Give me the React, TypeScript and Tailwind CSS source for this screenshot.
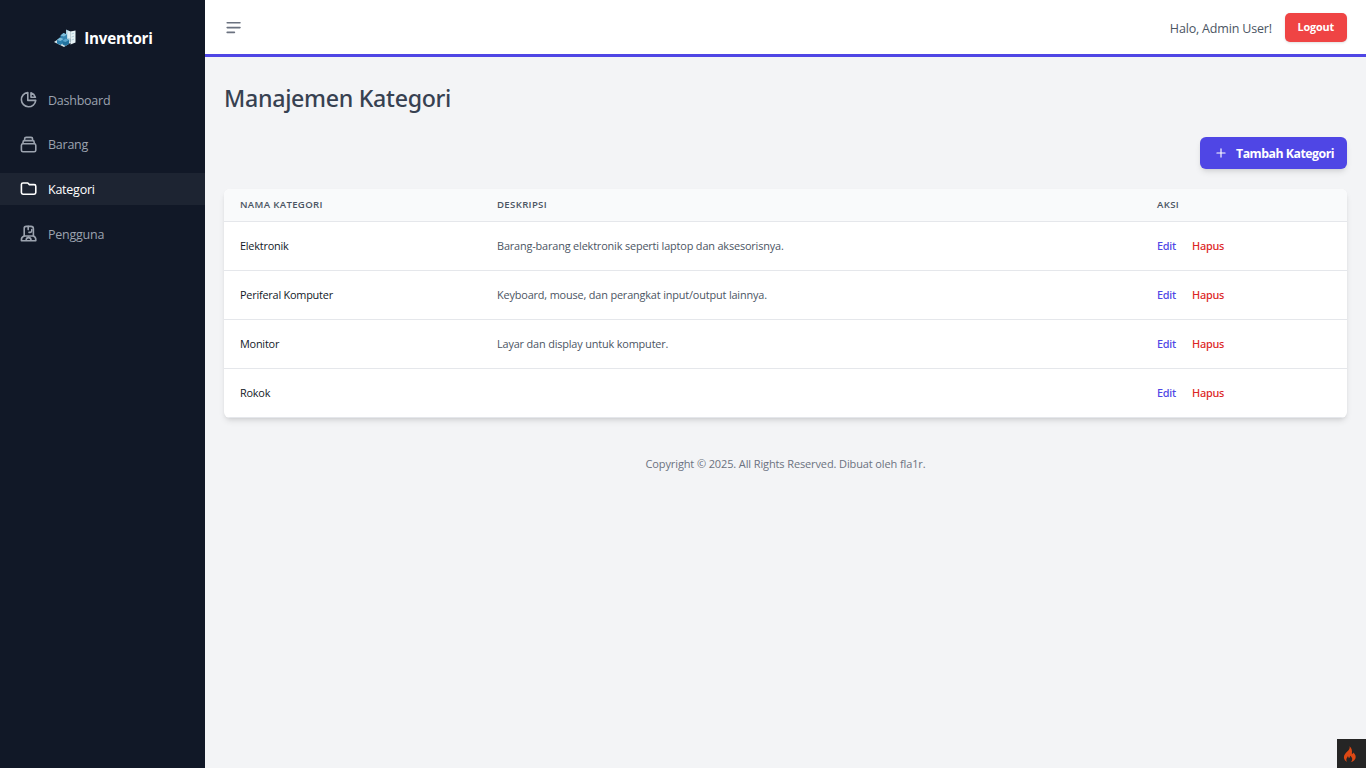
import React from "react";

const navItems = [
  {
    label: "Dashboard",
    active: false,
    paths: [
      "M11 3.055A9.001 9.001 0 1020.945 13H11V3.055z",
      "M20.488 9H15V3.512A9.025 9.025 0 0120.488 9z",
    ],
  },
  {
    label: "Barang",
    active: false,
    paths: [
      "M19 11H5m14 0a2 2 0 012 2v6a2 2 0 01-2 2H5a2 2 0 01-2-2v-6a2 2 0 012-2m14 0V9a2 2 0 00-2-2M5 11V9a2 2 0 012-2m0 0V5a2 2 0 012-2h6a2 2 0 012 2v2M7 7h10",
    ],
  },
  {
    label: "Kategori",
    active: true,
    paths: ["M3 7v10a2 2 0 002 2h14a2 2 0 002-2V9a2 2 0 00-2-2h-6l-2-2H5a2 2 0 00-2 2z"],
  },
  {
    label: "Pengguna",
    active: false,
    paths: [
      "M6.500 15V5.500a2.500 2.500 0 012.500-2.500h6a3 3 0 013 3v9",
      "M11.500 3v4M12.500 10.500h1.500a2 2 0 002-2V7",
      "M6.500 15A5 5 0 003 20v1h18v-1a5 5 0 00-3-5M7 15h11M9 21v-1a3 3 0 016 0v1",
    ],
  },
];

const rows = [
  { name: "Elektronik", description: "Barang-barang elektronik seperti laptop dan aksesorisnya." },
  { name: "Periferal Komputer", description: "Keyboard, mouse, dan perangkat input/output lainnya." },
  { name: "Monitor", description: "Layar dan display untuk komputer." },
  { name: "Rokok", description: "" },
];

function Logo() {
  return (
    <svg viewBox="0 0 24 20" className="mr-px h-5 w-6">
      <path d="M13 1.500l4.500 2v11.500l-4.500-2z" fill="#a9d0e0" />
      <path d="M14.500 2.500l3 1.200v7l-3-1z" fill="#dcecf2" />
      <path d="M17.500 3.500l5-1v12l-5 2z" fill="#e6f2f6" />
      <path d="M18.500 6l2.500-.8M18.500 9l2.500-.8M18.500 12l2.500-.8" stroke="#8fb9c9" strokeWidth=".6" />
      <path d="M1 14l6-4 11 4.500-7 4.500z" fill="#d5e5ea" />
      <path d="M7.500 7.500l3-2.500 3.500 1.500v5l-3 2-3.500-1.500z" fill="#3586b2" />
      <path d="M7.500 7.500l3-2.500 3.500 1.500-3 2z" fill="#7fbedb" />
      <path d="M4 12l3-2.500 3.500 1.500v4l-3 2-3.500-1.500z" fill="#2c7fac" />
      <path d="M4 12l3-2.500 3.500 1.500-3 2z" fill="#7fbedb" />
      <path d="M9.500 13l3-2.500 3.500 1.500v4l-3.500 2-3-1.500z" fill="#23729d" />
      <path d="M9.500 13l3-2.500 3.500 1.500-3.500 2z" fill="#5aa5cc" />
    </svg>
  );
}

function Sidebar() {
  return (
    <aside className="flex w-[205px] shrink-0 flex-col bg-[#111827]">
      <div className="mt-[26px] flex h-6 items-center justify-center gap-[6px] pl-px">
        <Logo />
        <span className="text-[15.2px] font-bold leading-6 tracking-[-0.16px] text-white">Inventori</span>
      </div>
      <nav className="mt-[33.6px] flex flex-col gap-[12.8px]">
        {navItems.map((item) => (
          <a
            key={item.label}
            href="#"
            className={
              item.active
                ? "flex h-8 items-center gap-[9.6px] bg-[#1d2432] px-[19.2px] text-white"
                : "flex h-8 items-center gap-[9.6px] px-[19.2px] text-[#9ca3af]"
            }
          >
            <svg
              viewBox="0 0 24 24"
              className="mb-[0.6px] size-[19.2px] shrink-0"
              fill="none"
              stroke="currentColor"
              strokeWidth="2"
              strokeLinecap="round"
              strokeLinejoin="round"
            >
              {item.paths.map((d) => (
                <path key={d} d={d} />
              ))}
            </svg>
            <span className="pt-[2px] text-[12.5px] leading-5 tracking-[-0.24px]">{item.label}</span>
          </a>
        ))}
      </nav>
    </aside>
  );
}

export default function App() {
  return (
    <div className="flex h-screen overflow-hidden bg-[#f3f4f6] font-['Open_Sans','Noto_Sans',sans-serif]">
      <Sidebar />
      <div className="flex min-w-0 flex-1 flex-col">
        <header className="flex h-[57px] shrink-0 items-center justify-between border-b-[3px] border-[#4f46e5] bg-white px-[19.2px]">
          <button className="pt-[2px] text-[#6b7280]" aria-label="Menu">
            <svg viewBox="0 0 24 24" className="size-[19.2px]" fill="none" stroke="currentColor" strokeWidth="2" strokeLinecap="round">
              <path d="M4 6h16M4 12h16M4 18h9" />
            </svg>
          </button>
          <div className="flex items-center gap-[13px]">
            <span className="pt-1 text-[12.5px] tracking-[-0.18px] text-[#4b5563]">Halo, Admin User!</span>
            <button className="h-[29px] w-[62px] rounded-[5px] bg-[#ef4444] text-[10.8px] font-bold tracking-[-0.1px] text-white shadow-sm">Logout</button>
          </div>
        </header>

        <main className="flex flex-col px-[19px] pt-[25px]">
          <h1 className="font-['Noto_Sans',sans-serif] text-[23.2px] font-medium leading-8 tracking-[-0.3px] text-[#374151]">Manajemen Kategori</h1>
          <div className="mt-[23px] flex justify-end">
            <button className="flex h-8 w-[147px] items-center rounded-[6px] bg-[#4f46e5] pl-[14px] text-white shadow-md">
              <svg viewBox="0 0 24 24" className="size-[14px] shrink-0" fill="none" stroke="currentColor" strokeWidth="2" strokeLinecap="round">
                <path d="M12 5v14M5 12h14" />
              </svg>
              <span className="ml-2 whitespace-nowrap pt-[3px] text-[12.3px] font-bold tracking-[-0.48px]">Tambah Kategori</span>
            </button>
          </div>

          <div className="mt-5 overflow-hidden rounded-[6px] bg-white shadow-md">
            <table className="w-full table-fixed border-separate border-spacing-0 text-left">
              <colgroup>
                <col className="w-[257px]" />
                <col className="w-[660px]" />
                <col />
              </colgroup>
              <thead>
                <tr className="h-[33px] bg-[#f9fafb] text-[9.6px] uppercase tracking-[0.34px] text-[#4b5563] [&>th]:border-b [&>th]:border-[#e5e7eb] [&>th]:px-4 [&>th]:py-0 [&>th]:font-semibold">
                  <th>Nama Kategori</th>
                  <th>Deskripsi</th>
                  <th>Aksi</th>
                </tr>
              </thead>
              <tbody>
                {rows.map((row) => (
                  <tr
                    key={row.name}
                    className="h-[49px] text-[10.9px] tracking-[-0.16px] [&>td]:border-b [&>td]:border-[#e5e7eb] [&>td]:px-4 [&>td]:pb-0 [&>td]:pt-px"
                  >
                    <td className="tracking-[-0.22px] text-[#111827]">{row.name}</td>
                    <td className="text-[#4b5563]">{row.description}</td>
                    <td className="font-['Noto_Sans',sans-serif] font-medium tracking-[-0.24px]">
                      <a href="#" className="text-[#4f46e5]">Edit</a>
                      <a href="#" className="ml-4 text-[#dc2626]">Hapus</a>
                    </td>
                  </tr>
                ))}
              </tbody>
            </table>
          </div>

          <footer className="mt-[38px] text-center text-[11px] leading-4 tracking-[-0.12px] text-[#6b7280]">
            Copyright © 2025. All Rights Reserved. Dibuat oleh fla1r.
          </footer>
        </main>
      </div>

      <div className="fixed bottom-0 right-0 flex size-[29px] items-center justify-center bg-[#252525]">
        <svg viewBox="0 0 14 17" className="mr-[3px] mt-[2px] h-[17px] w-[14px]">
          <path
            d="M6.500.3c.7 2.100-.5 3.500-2 5C2.800 7 .9 8.700.9 11.200c0 2.300 1.500 4.100 3.500 4.900-1.100-1.100-1.400-2.500-.7-3.800.4-.8 1-1.300 1.100-2.100.8.5 1 1.200.8 2.100.8-.3 1.500-1 1.400-2.500 1.500.9 2.400 2.200 2.200 3.700-.1 1.100-.6 1.900-1.400 2.600 2.800-.8 4.900-2.700 4.900-5.200 0-2.100-1.300-3.200-2.200-4.500-.3.900-.8 1.300-1.600 1.500C9.300 4.700 8.800 2.100 6.500.3z"
            fill="#dd4814"
          />
        </svg>
      </div>
    </div>
  );
}
